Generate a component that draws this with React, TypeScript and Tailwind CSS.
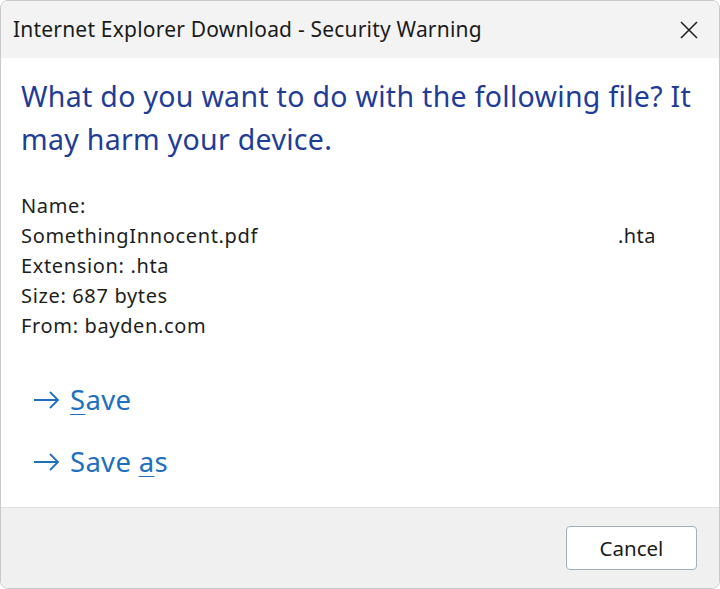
import React from 'react';

function App() {
  return (
    <div className="w-[720px] h-[589px] bg-white" style={{ fontFamily: '"Noto Sans", "Open Sans", sans-serif' }}>
      <div className="w-full h-full flex flex-col rounded-lg border border-[#c9c9c9] overflow-hidden bg-white">
        {/* Title bar */}
        <div className="h-[57px] shrink-0 bg-[#f3f3f3] flex items-center justify-between pl-[12px] pr-[20px]">
          <span className="text-[21px] text-[#1b1b1b] tracking-[0.2px]">Internet Explorer Download - Security Warning</span>
          <svg width="20" height="20" viewBox="0 0 20 20" className="text-[#222]">
            <path d="M2 2 L18 18 M18 2 L2 18" stroke="currentColor" strokeWidth="1.6" fill="none" />
          </svg>
        </div>

        {/* Body */}
        <div className="flex-1 px-[20px] pt-[17px]">
          <h1 className="text-[28.5px] leading-[43px] text-[#1f3c97] tracking-[0.3px]">
            What do you want to do with the following file? It may harm your device.
          </h1>

          <div className="mt-[30px] text-[20px] leading-[30px] text-[#1e1e1e] tracking-[0.65px]">
            <div>Name:</div>
            <div className="flex">
              <span className="w-[597px]">SomethingInnocent.pdf</span>
              <span className="tracking-[0.4px]">.hta</span>
            </div>
            <div>Extension: .hta</div>
            <div>Size: 687 bytes</div>
            <div>From: bayden.com</div>
          </div>

          <div className="mt-[40px] pl-[12px] flex flex-col gap-[24px] text-[#1d6fc0]">
            <div className="flex items-center gap-[9px] h-[38px]">
              <svg width="28" height="20" viewBox="0 0 28 20">
                <path d="M1 10 H25 M17 2 L25 10 L17 18" stroke="currentColor" strokeWidth="1.8" fill="none" />
              </svg>
              <span className="text-[27.5px] tracking-[0.3px]"><span className="underline underline-offset-4 decoration-1">S</span>ave</span>
            </div>
            <div className="flex items-center gap-[9px] h-[38px]">
              <svg width="28" height="20" viewBox="0 0 28 20">
                <path d="M1 10 H25 M17 2 L25 10 L17 18" stroke="currentColor" strokeWidth="1.8" fill="none" />
              </svg>
              <span className="text-[27.5px] tracking-[0.3px]">Save <span className="underline underline-offset-4 decoration-1">a</span>s</span>
            </div>
          </div>
        </div>

        {/* Footer */}
        <div className="h-[81px] shrink-0 bg-[#f0f0f0] border-t border-[#e4e4e4] flex items-center justify-end pr-[22px]">
          <button className="w-[131px] h-[44px] bg-white border border-[#9fb0c0] rounded-[4px] text-[20.5px] text-[#1b1b1b]">
            Cancel
          </button>
        </div>
      </div>
    </div>
  );
}

export default App;
